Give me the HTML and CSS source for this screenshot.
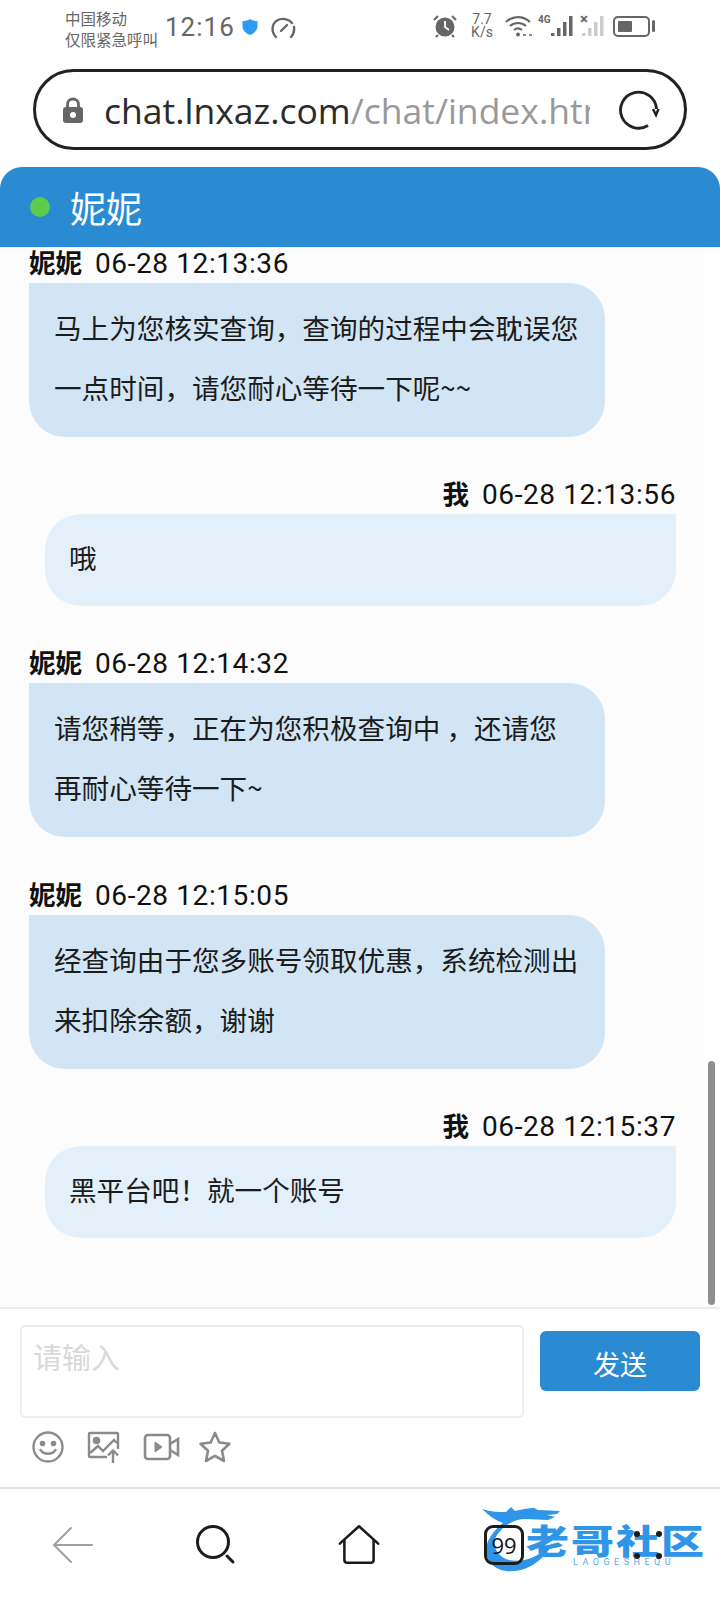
FILE: index.html
```html
<!DOCTYPE html>
<html lang="zh-CN">
<head>
    <meta charset="UTF-8">
    <meta name="viewport" content="width=device-width, initial-scale=1.0">
    <title>妮妮</title>
    <link rel="stylesheet" href="styles.css">
</head>
<body>
    <div class="status-bar">
        <div class="carrier">
            <span>中国移动</span>
            <span>仅限紧急呼叫</span>
        </div>
        <span class="clock">12:16</span>
        <svg class="st-shield" width="18" height="18" viewBox="0 0 18 18"><path d="M9 1c2 1.400 4.500 2 7.500 2.200v5c0 4-3 6.800-7.500 8.800-4.500-2-7.500-4.800-7.500-8.800v-5C4.500 3 7 2.400 9 1z" fill="#2f9bf0"/></svg>
        <svg class="st-gauge" width="26" height="24" viewBox="0 0 26 24" fill="none" stroke="#666" stroke-width="2.400" stroke-linecap="round"><path d="M6 21C1 16 1.500 8 7 4.500 12 1.500 19 3 22 7"/><path d="M24 11c.5 4-.5 7.500-3 10"/><path d="M11 15l6-6"/></svg>
        <div class="status-right">
            <svg width="24" height="24" viewBox="0 0 24 24"><circle cx="12" cy="13" r="9.500" fill="#666"/><path d="M12 7v6l4 3" fill="none" stroke="#fff" stroke-width="1.800"/><path d="M1 6l4-4M23 6l-4-4M5 21l-2 2M19 21l2 2" stroke="#666" stroke-width="2"/></svg>
            <div class="speed"><span>7.7</span><span>K/s</span></div>
            <svg class="wifi" width="28" height="24" viewBox="0 0 28 24" fill="none" stroke="#666" stroke-width="2.200"><path d="M1 8c7-6.500 17-6.500 24 0"/><path d="M5 12c4.500-4 11.500-4 16 0"/><path d="M9 16c2.500-2 5.500-2 8 0"/><circle cx="13" cy="20.500" r="2" fill="#666" stroke="none"/><path d="M18 21h3M24 21h3" stroke-width="1.500"/></svg>
            <div class="signal">
                <span class="net">4G</span>
                <svg width="24" height="24" viewBox="0 0 24 24" fill="#666"><rect x="1" y="19" width="3.500" height="3"/><rect x="7" y="14" width="3.500" height="8"/><rect x="13" y="8" width="3.500" height="14"/><rect x="19" y="2" width="3.500" height="20"/></svg>
            </div>
            <div class="signal signal-off">
                <span class="net">×</span>
                <svg width="24" height="24" viewBox="0 0 24 24" fill="#ccc"><rect x="1" y="19" width="3.500" height="3"/><rect x="7" y="14" width="3.500" height="8"/><rect x="13" y="8" width="3.500" height="14"/><rect x="19" y="2" width="3.500" height="20"/></svg>
            </div>
            <div class="battery"><div class="battery-level"></div></div>
            <div class="battery-cap"></div>
        </div>
    </div>

    <div class="url-bar">
        <svg class="lock" width="22" height="26" viewBox="0 0 22 26"><path d="M5.500 11V7.500a5.500 5.500 0 0 1 11 0V11" fill="none" stroke="#666" stroke-width="2.800"/><rect x="1" y="10" width="20" height="16" rx="3" fill="#666"/><circle cx="11" cy="18" r="3" fill="#fff"/></svg>
        <div class="url-text"><span class="host">chat.lnxaz.com</span>/chat/index.html</div>
        <svg class="reload" width="42" height="42" viewBox="0 0 42 42" fill="none" stroke="#222" stroke-width="2.800"><path d="M30 36.500A18 18 0 1 1 38.500 20"/><path d="M35 20l3 6 2.500-6" stroke-width="2.400"/></svg>
    </div>

    <div class="chat-header">
        <span class="online-dot"></span>
        <span class="chat-title">妮妮</span>
    </div>

    <div class="chat-body">
        <div class="chat-list">
            <div class="msg msg-in">
                <div class="msg-head"><b>妮妮</b><span>06-28 12:13:36</span></div>
                <div class="bubble">马上为您核实查询，查询的过程中会耽误您一点时间，请您耐心等待一下呢~~</div>
            </div>
            <div class="msg msg-out">
                <div class="msg-head"><b>我</b><span>06-28 12:13:56</span></div>
                <div class="bubble">哦</div>
            </div>
            <div class="msg msg-in">
                <div class="msg-head"><b>妮妮</b><span>06-28 12:14:32</span></div>
                <div class="bubble">请您稍等，正在为您积极查询中 ，还请您再耐心等待一下~</div>
            </div>
            <div class="msg msg-in">
                <div class="msg-head"><b>妮妮</b><span>06-28 12:15:05</span></div>
                <div class="bubble">经查询由于您多账号领取优惠，系统检测出来扣除余额，谢谢</div>
            </div>
            <div class="msg msg-out">
                <div class="msg-head"><b>我</b><span>06-28 12:15:37</span></div>
                <div class="bubble">黑平台吧！就一个账号</div>
            </div>
        </div>
        <div class="scrollbar"></div>
    </div>

    <div class="composer">
        <div class="composer-row">
            <div class="input-box">请输入</div>
            <button class="send-btn">发送</button>
        </div>
        <div class="tools">
            <svg width="34" height="34" viewBox="0 0 34 34" fill="none" stroke="#8a8a8a" stroke-width="2.400" stroke-linecap="round"><circle cx="17" cy="17" r="14.500"/><circle cx="11.500" cy="13.500" r="1.600" fill="#8a8a8a"/><circle cx="22.500" cy="13.500" r="1.600" fill="#8a8a8a"/><path d="M9.500 20c3.500 5 11.500 5 15 0"/></svg>
            <svg width="34" height="34" viewBox="0 0 34 34" fill="none" stroke="#8a8a8a" stroke-width="2.400"><path d="M20 27H3a1 1 0 0 1-1-1V4a1 1 0 0 1 1-1h27a1 1 0 0 1 1 1v15"/><circle cx="9.500" cy="10.500" r="2.600" fill="#8a8a8a"/><path d="M3 23l8-7 5 5 11-11 3 3"/><path d="M26 33V21M21 25.500l5-5 5 5"/></svg>
            <svg width="38" height="30" viewBox="0 0 38 30" fill="none" stroke="#8a8a8a" stroke-width="2.600"><rect x="2" y="3" width="25" height="24" rx="3"/><path d="M12 10l7 5-7 5z" fill="#8a8a8a" stroke-width="1"/><path d="M27 12l8-5v16l-8-5"/></svg>
            <svg width="34" height="34" viewBox="0 0 34 34" fill="none" stroke="#8a8a8a" stroke-width="2.600" stroke-linejoin="round"><path d="M17 3l4.300 9.500 10.200 1.200-7.500 7 2 10.300-9-5.200-9 5.200 2-10.300-7.500-7 10.200-1.200z"/></svg>
        </div>
    </div>

    <div class="nav-bar">
        <svg width="44" height="38" viewBox="0 0 44 38" fill="none" stroke="#a0a0a0" stroke-width="2" stroke-linecap="round"><path d="M41 19H3M20 2L3 19l17 17"/></svg>
        <svg width="40" height="40" viewBox="0 0 40 40" fill="none" stroke="#1c1c1c" stroke-width="3" stroke-linecap="round"><circle cx="17" cy="17" r="15.500"/><path d="M31 31l6 6"/></svg>
        <svg width="42" height="41" viewBox="0 0 46 44" fill="none" stroke="#1c1c1c" stroke-width="2.800" stroke-linecap="round" stroke-linejoin="round"><path d="M2 21L23 2l21 19"/><path d="M7 17v22a3 3 0 0 0 3 3h26a3 3 0 0 0 3-3V17"/></svg>

        <div class="logo">
            <svg class="logo-mark" width="110" height="72" viewBox="0 0 110 72"><path d="M0 6c10 3 16 3 24 3l5-5 4 4c8-2 14-3 19-3l4 2 22 1-3 3-10 1 8 2-7 3-22-1c-12 0-22 6-29 16-6 10 0 22 12 25 15 3 30-3 38-14l3 2c-9 14-25 25-44 23C8 66-3 50 9 33c3-5 7-9 12-13C13 17 6 12 0 6z" fill="#2f95e8"/></svg>
            <span class="logo-name">老哥社区</span>
            <span class="logo-sub">LAOGESHEQU</span>
        </div>

        <div class="tabs-icon">99</div>
        <div class="menu-dots"><i></i><i></i><i></i><i></i></div>
    </div>
</body>
</html>
```

FILE: styles.css
```css
* {
    box-sizing: border-box;
}

body {
    margin: 0;
    width: 720px;
    height: 1600px;
    display: flex;
    flex-direction: column;
    overflow: hidden;
    background-color: #fff;
    font-family: "Noto Sans CJK SC", sans-serif;
    color: #111;
}

.status-bar {
    height: 69px;
    flex: none;
    display: flex;
    align-items: flex-start;
    padding: 8px 0 0 65px;
    color: #666;
}

.carrier {
    display: flex;
    flex-direction: column;
    font-size: 15.5px;
    line-height: 21px;
    width: 100px;
}

.clock {
    font-family: Roboto, sans-serif;
    font-size: 26px;
    line-height: 38px;
    letter-spacing: 1px;
    width: 76px;
}

.st-shield {
    margin: 10px 11px 0 0;
}

.st-gauge {
    margin-top: 8px;
}

.status-right {
    margin-left: auto;
    margin-right: 65px;
    display: flex;
    align-items: center;
    height: 36px;
}

.speed {
    width: 24px;
    margin-left: 13px;
    display: flex;
    flex-direction: column;
    align-items: center;
    font-family: Roboto, sans-serif;
    font-size: 14px;
    line-height: 13px;
}

.wifi {
    margin-left: 11px;
}

.signal {
    position: relative;
    margin-left: 3px;
    padding-left: 14px;
}

.signal svg {
    display: block;
}

.net {
    position: absolute;
    top: 0;
    left: 2px;
    font-family: Roboto, sans-serif;
    font-size: 10px;
    line-height: 12px;
    font-weight: 700;
}

.signal-off {
    margin-left: 0;
    padding-left: 7px;
}

.signal-off .net {
    left: 6px;
    top: -1px;
    font-size: 15px;
}

.battery {
    width: 37px;
    height: 21px;
    border: 2px solid #666;
    border-radius: 5px;
    padding: 3px;
    margin-left: 8px;
}

.battery-level {
    width: 14px;
    height: 100%;
    background-color: #666;
    border-radius: 1px;
}

.battery-cap {
    width: 3px;
    height: 12px;
    background-color: #666;
    border-radius: 2px;
    margin-left: 2px;
}

.url-bar {
    height: 81px;
    flex: none;
    margin: 0 33px 17px;
    border: 3px solid #222;
    border-radius: 41px;
    display: flex;
    align-items: center;
    padding-left: 26px;
    padding-right: 24px;
}

.lock {
    flex: none;
    margin-right: 20px;
}

.url-text {
    flex: none;
    width: 486px;
    overflow: hidden;
    white-space: nowrap;
    font-family: "Open Sans", sans-serif;
    font-size: 35.5px;
    color: #999;
}

.host {
    color: #2b2b2b;
}

.reload {
    flex: none;
    margin-left: auto;
}

.chat-header {
    height: 80px;
    flex: none;
    background-color: #2a8bd2;
    border-radius: 22px 22px 0 0;
    display: flex;
    align-items: center;
    padding-left: 30px;
}

.online-dot {
    width: 20px;
    height: 20px;
    border-radius: 50%;
    background-color: #5ccb4c;
    margin-right: 20px;
}

.chat-title {
    color: #fff;
    font-size: 36px;
}

.chat-body {
    position: relative;
    height: 1062px;
    flex: none;
    overflow: hidden;
    background-color: #fff;
    border-bottom: 2px solid #ececec;
}

.chat-list {
    width: 704px;
    height: 1064px;
    background-color: #fcfcfc;
    margin-top: -4px;
}

.msg {
    margin-bottom: 37.2px;
}

.msg-head {
    height: 40px;
    line-height: 36px;
    font-size: 28px;
    white-space: nowrap;
    color: #111;
}

.msg-head b {
    margin-right: 13px;
    font-weight: 700;
    font-size: 26.5px;
}

.msg-head span {
    font-family: Roboto, sans-serif;
    letter-spacing: 0.6px;
}

.bubble {
    font-size: 27.6px;
    line-height: 60px;
    padding: 14px 26px 20px 25px;
    color: #1c1c1c;
}

.msg-in {
    padding-left: 29px;
}

.msg-in .bubble {
    width: 576px;
    background-color: #d2e5f4;
    border-radius: 0 36px 36px 36px;
}

.msg-out {
    padding: 0 28px 0 45px;
}

.msg-out .msg-head {
    text-align: right;
}

.msg-out .bubble {
    padding: 13px 26px 19px 24px;
    background-color: #e3eff9;
    border-radius: 36px 0 36px 36px;
}

.scrollbar {
    position: absolute;
    right: 5px;
    bottom: 2px;
    width: 7px;
    height: 244px;
    background-color: #8f8f8f;
    border-radius: 4px;
}

.composer {
    height: 180px;
    flex: none;
    padding: 16px 20px 0;
    border-bottom: 2px solid #e2e2e2;
}

.composer-row {
    display: flex;
    align-items: flex-start;
}

.input-box {
    width: 504px;
    height: 93px;
    border: 2px solid #e8eff4;
    border-radius: 5px;
    padding: 8px 11px;
    font-size: 29px;
    line-height: 42px;
    color: #d9d9d9;
}

.send-btn {
    width: 160px;
    height: 60px;
    margin: 6px 0 0 16px;
    padding-top: 5px;
    border: none;
    border-radius: 6px;
    background-color: #2a8bd2;
    color: #fff;
    font-family: inherit;
    font-size: 27px;
}

.tools {
    display: flex;
    align-items: center;
    gap: 22px;
    padding: 12px 0 0 11px;
}

.tools svg:last-child {
    margin-left: -5px;
}

.nav-bar {
    position: relative;
    flex: 1;
    display: flex;
    align-items: center;
    padding-left: 51px;
}

.nav-bar > svg:nth-child(2) {
    margin-left: 101px;
}

.nav-bar > svg:nth-child(3) {
    margin-left: 102px;
}

.tabs-icon {
    position: relative;
    width: 40px;
    height: 40px;
    margin-left: 104px;
    border: 3px solid #1c1c1c;
    border-radius: 9px;
    font-family: "Open Sans", sans-serif;
    font-size: 22px;
    line-height: 34px;
    text-align: center;
}

.menu-dots {
    position: relative;
    display: grid;
    grid-template-columns: 6px 6px;
    gap: 16px;
    margin-left: 110px;
}

.menu-dots i {
    width: 6px;
    height: 6px;
    border-radius: 50%;
    background-color: #1c1c1c;
}

.logo {
    position: absolute;
    left: 482px;
    top: 14px;
    width: 225px;
    height: 76px;
}

.logo-mark {
    position: absolute;
    left: 0;
    top: 0;
}

.logo-name {
    position: absolute;
    left: 44px;
    top: 12px;
    font-size: 43px;
    line-height: 48px;
    font-weight: 900;
    letter-spacing: 2px;
    color: #2f95e8;
    white-space: nowrap;
    transform: scaleY(0.78);
}

.logo-sub {
    position: absolute;
    left: 91px;
    top: 54px;
    font-family: Roboto, sans-serif;
    font-size: 9px;
    line-height: 10px;
    letter-spacing: 4.500px;
    color: #5aa9e6;
    white-space: nowrap;
}
```
